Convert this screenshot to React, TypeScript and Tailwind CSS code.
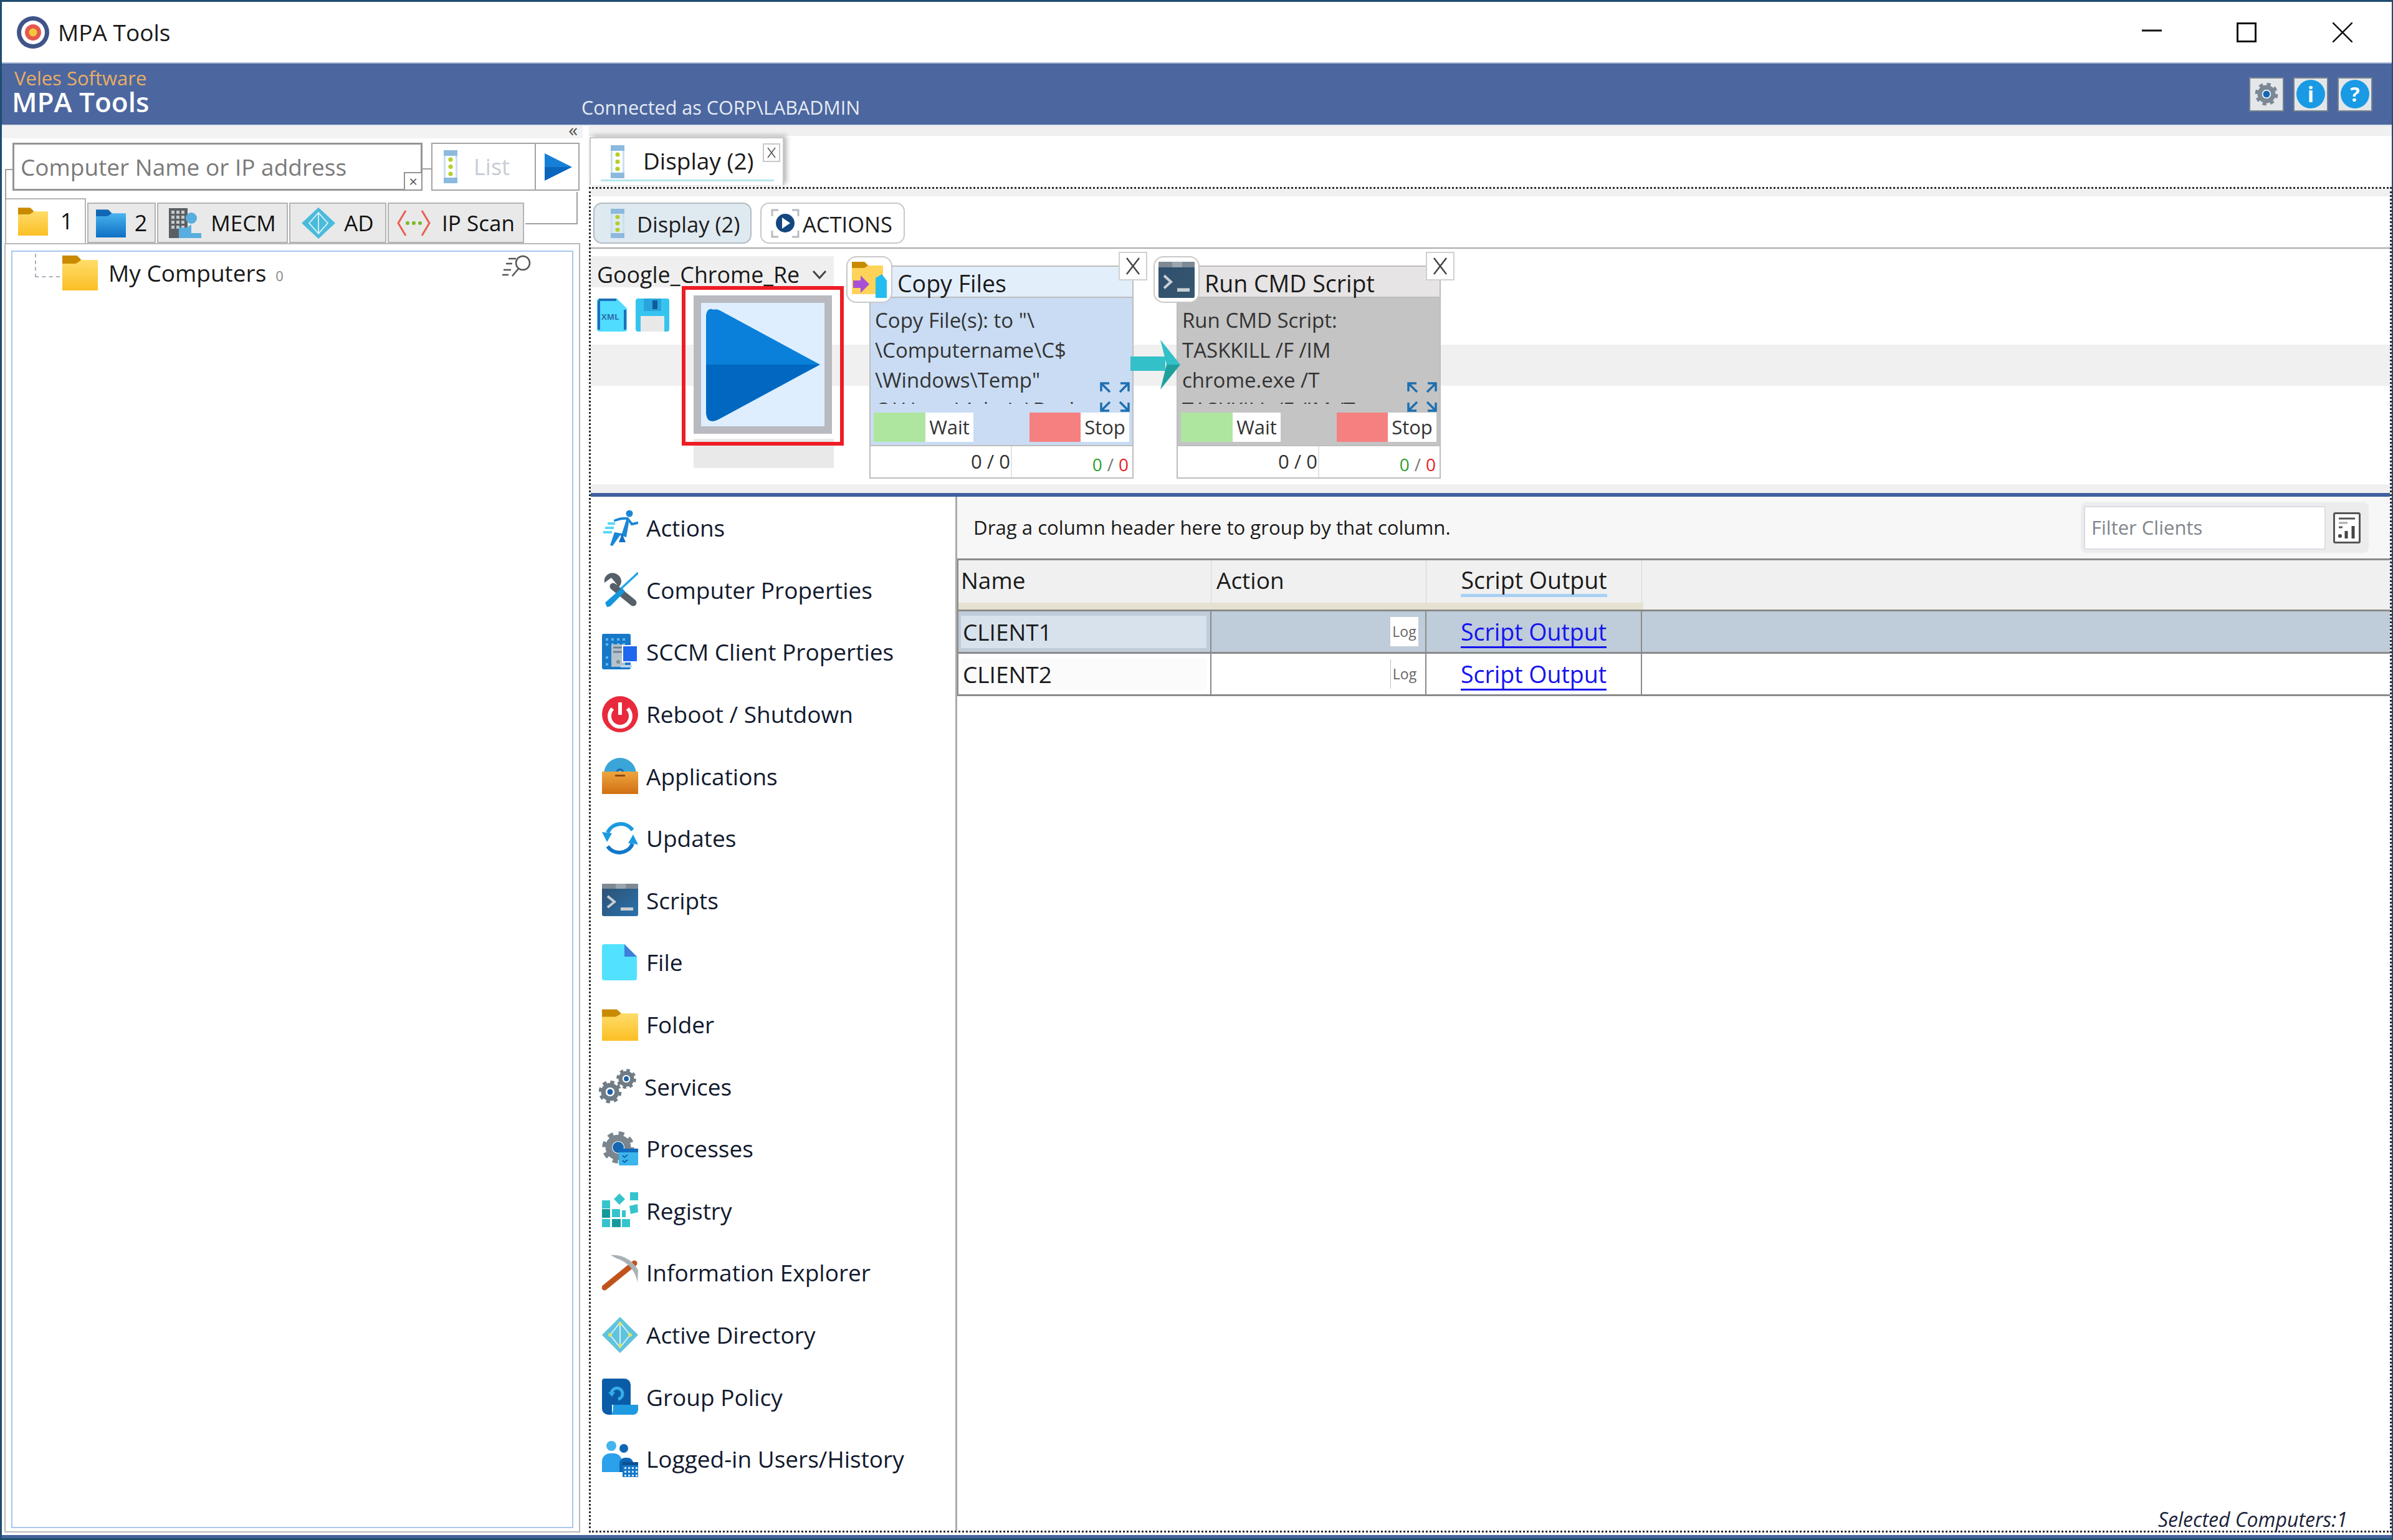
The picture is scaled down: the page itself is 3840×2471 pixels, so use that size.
import React from "react";

const Folder = ({ w = 58, h = 58, tab = "#c98a00", a = "#ffdc6a", b = "#fbbf24", id }: { w?: number; h?: number; tab?: string; a?: string; b?: string; id: string }) => (
  <svg width={w} height={h} viewBox="0 0 58 58" preserveAspectRatio="none">
    <defs>
      <linearGradient id={id} x1="0" y1="0" x2="0" y2="1">
        <stop offset="0" stopColor={a} />
        <stop offset="1" stopColor={b} />
      </linearGradient>
    </defs>
    <path d="M0 2h24l7 7v10H0z" fill={tab} />
    <path d="M0 9h58v49H0z" fill={`url(#${id})`} />
    <path d="M0 2h22l8 8-8 5H0z" fill={tab} />
  </svg>
);

const DisplayIcon = ({ h = 53 }: { h?: number }) => (
  <svg width="22" height={h} viewBox="0 0 22 53" preserveAspectRatio="none">
    <rect x="0" y="0" width="22" height="9" fill="#8cb9de" />
    <rect x="0" y="44" width="22" height="9" fill="#8cb9de" />
    <rect x="0" y="9" width="3" height="35" fill="#c9e0f2" />
    <rect x="19" y="9" width="3" height="35" fill="#c9e0f2" />
    <circle cx="11" cy="15" r="3.6" fill="#b4cf2c" />
    <circle cx="11" cy="26.5" r="3.6" fill="#b4cf2c" />
    <circle cx="11" cy="38" r="3.6" fill="#b4cf2c" />
  </svg>
);

const Gear = ({ cx, cy, r, fill = "#6f7b85", hole = "#1d5fa8", holeR }: { cx: number; cy: number; r: number; fill?: string; hole?: string; holeR?: number }) => {
  const teeth = 8;
  const c = 2 * Math.PI * r;
  return (
    <g>
      <circle cx={cx} cy={cy} r={r} fill="none" stroke={fill} strokeWidth={r * 0.45} strokeDasharray={`${c / teeth / 2} ${c / teeth / 2}`} />
      <circle cx={cx} cy={cy} r={r * 0.72} fill="none" stroke={fill} strokeWidth={r * 0.5} />
      <circle cx={cx} cy={cy} r={r * 0.47} fill="#fff" />
      <circle cx={cx} cy={cy} r={holeR ?? r * 0.3} fill={hole} />
    </g>
  );
};

const Terminal = ({ w = 58, h = 52 }: { w?: number; h?: number }) => (
  <svg width={w} height={h} viewBox="0 0 58 52" preserveAspectRatio="none">
    <defs>
      <linearGradient id={`term${w}${h}`} x1="0" y1="0" x2="1" y2="1">
        <stop offset="0" stopColor="#2e4f6e" />
        <stop offset="1" stopColor={h > 52 ? "#37566f" : "#2a72ad"} />
      </linearGradient>
    </defs>
    <rect width="58" height="52" rx="3" fill={`url(#term${w}${h})`} />
    <rect x="0" y="0" width="58" height="8" fill="#7d8a95" />
    <rect x="22" y="0" width="16" height="8" fill="#9aa5ae" />
    <path d="M9 20l11 9-11 9" fill="none" stroke="#c8ced3" strokeWidth="4" />
    <rect x="30" y="38" width="20" height="5" fill="#c8ced3" />
  </svg>
);

const MenuIcon = ({ name }: { name: string }) => {
  switch (name) {
    case "actions":
      return (
        <svg width="58" height="58" viewBox="0 0 58 58">
          <circle cx="44" cy="6" r="5.5" fill="#1c86d6" />
          <path d="M21 17c8-3 14-4 20-3l7 9 9-2" fill="none" stroke="#1c86d6" strokeWidth="4" strokeLinecap="round" />
          <path d="M40 13L32 38l-12-2-7 21 4 1 12-17 10 3 4-23z" fill="#1c86d6" />
          <path d="M32 38l6 14 -11 0 3-8z" fill="#0f6fc0" />
          <path d="M2 36h14M5 29h14M9 22h12" stroke="#5ad9f5" strokeWidth="4" />
        </svg>
      );
    case "props":
      return (
        <svg width="58" height="58" viewBox="0 0 58 58">
          <path d="M18 24L50 50" stroke="#55606a" strokeWidth="11" strokeLinecap="round" />
          <path d="M21 3a13 13 0 0 0-17 15L15 10l9 11-8 8a14 14 0 0 0 15-13c0-6-4-11-10-13z" fill="#55606a" />
          <path d="M58 2L30 28" stroke="#22a7e8" strokeWidth="3.5" />
          <path d="M32 26L5 50l3 7 5-1 24-24z" fill="#1496de" />
        </svg>
      );
    case "sccm":
      return (
        <svg width="58" height="58" viewBox="0 0 58 58">
          <rect x="0" y="0" width="46" height="57" rx="3" fill="#1778c8" />
          <g fill="#5db5ef">
            {[6, 15, 24, 33].map((x) => [7, 15, 36, 47].map((y) => <rect key={`${x}${y}`} x={x} y={y} width="4" height="4" />))}
          </g>
          <rect x="15" y="17" width="22" height="36" fill="#b4c2cc" />
          <path d="M18 22h16M18 29h16" stroke="#6f8090" strokeWidth="3" />
          <circle cx="26" cy="45" r="3" fill="#7f8e99" />
          <rect x="32" y="18" width="26" height="28" fill="#fff" />
          <rect x="34" y="20" width="22" height="24" fill="#2068ee" />
          <rect x="30" y="50" width="18" height="4" fill="#b7d6ef" />
        </svg>
      );
    case "reboot":
      return (
        <svg width="58" height="58" viewBox="0 0 58 58">
          <circle cx="29" cy="29" r="29" fill="#e82a3c" />
          <path d="M17 20a17 17 0 1 0 24 0" fill="none" stroke="#fff" strokeWidth="6" />
          <path d="M29 10v20" stroke="#fff" strokeWidth="6" />
        </svg>
      );
    case "apps":
      return (
        <svg width="58" height="58" viewBox="0 0 58 58">
          <circle cx="29" cy="26" r="26" fill="#39a5d8" />
          <circle cx="29" cy="24" r="7" fill="#1f6fb0" />
          <circle cx="29" cy="24" r="3" fill="#cfeaf8" />
          <defs>
            <linearGradient id="brief" x1="0" y1="0" x2="0" y2="1">
              <stop offset="0" stopColor="#eea53f" />
              <stop offset="1" stopColor="#d16f14" />
            </linearGradient>
          </defs>
          <path d="M0 22h58v36H0z" fill="url(#brief)" />
          <rect x="21" y="27" width="16" height="3" fill="#874c12" />
        </svg>
      );
    case "updates":
      return (
        <svg width="58" height="58" viewBox="0 0 58 58" fill="none">
          <path d="M9 20A23 23 0 0 1 49 16" stroke="#1c9ae0" strokeWidth="6" />
          <path d="M49 38A23 23 0 0 1 9 42" stroke="#1277c8" strokeWidth="6" />
          <path d="M0 19l16 2-8 14z" fill="#1c9ae0" />
          <path d="M58 39l-16-2 8-14z" fill="#1c9ae0" />
        </svg>
      );
    case "file":
      return (
        <svg width="56" height="58" viewBox="0 0 56 58">
          <path d="M4 0h32l20 20v34a4 4 0 0 1-4 4H4a4 4 0 0 1-4-4V4a4 4 0 0 1 4-4z" fill="#52e2ff" />
          <path d="M36 0l20 20H36z" fill="#3d7ed8" />
        </svg>
      );
    case "services":
      return (
        <svg width="62" height="58" viewBox="0 0 62 58" className="-ml-[5px]">
          <Gear cx={44} cy={17} r={13} />
          <Gear cx={18} cy={38} r={15} />
        </svg>
      );
    case "processes":
      return (
        <svg width="58" height="56" viewBox="0 0 58 56">
          <Gear cx={26} cy={26} r={21} fill="#7a858e" hole="#1667b0" holeR={9} />
          <rect x="27" y="28" width="31" height="27" rx="2" fill="#3cb4ec" />
          <rect x="27" y="28" width="31" height="6" fill="#0f6cc0" />
          <path d="M33 39l3 3 5-4M33 47l3 3 5-4" stroke="#0e5fb0" strokeWidth="2" fill="none" />
        </svg>
      );
    case "registry":
      return (
        <svg width="58" height="58" viewBox="0 0 58 58">
          <g fill="#35c4cd">
            <rect x="0" y="13" width="13" height="13" />
            <rect x="16" y="27" width="13" height="13" />
            <rect x="0" y="43" width="13" height="13" />
            <rect x="32" y="43" width="13" height="13" />
            <rect x="45" y="0" width="13" height="13" />
            <path d="M28 2l9 9-9 9-9-9z" />
            <path d="M44 22l13-3 1 13-12 3z" />
          </g>
          <g fill="#159a9c">
            <rect x="0" y="27" width="13" height="14" />
            <rect x="16" y="43" width="14" height="13" />
          </g>
          <rect x="32" y="29" width="6" height="11" fill="#35c4cd" />
        </svg>
      );
    case "pick":
      return (
        <svg width="58" height="58" viewBox="0 0 58 58">
          <path d="M4 53L52 14" stroke="#c0531b" strokeWidth="9" strokeLinecap="round" />
          <path d="M14 1c16-2 34 6 44 24l-1 20c-4-22-18-34-34-39z" fill="#a9b0b6" />
        </svg>
      );
    case "ad":
      return (
        <svg width="58" height="58" viewBox="0 0 58 58">
          <path d="M29 0l29 29-29 29L0 29z" fill="#5fc3de" />
          <path d="M29 9v40M13 29l16-20 16 20-16 20z" stroke="#d8f1f7" strokeWidth="2" fill="none" />
          <circle cx="29" cy="11" r="3" fill="#d9e36a" />
          <circle cx="29" cy="46" r="3" fill="#d9e36a" />
          <circle cx="13" cy="29" r="3" fill="#d9e36a" />
          <circle cx="45" cy="29" r="3" fill="#d9e36a" />
        </svg>
      );
    case "gp":
      return (
        <svg width="58" height="58" viewBox="0 0 58 58">
          <path d="M4 0h32a10 10 0 0 1 10 10v32H16v16H10A10 10 0 0 1 0 48V4a4 4 0 0 1 4-4z" fill="#0a5ca8" />
          <path d="M46 42h12v8a8 8 0 0 1-8 8H14c3-2 4-6 4-16z" fill="#1f9ae0" />
          <path d="M15 24a9 9 0 1 1 11 9" fill="none" stroke="#35aee8" strokeWidth="5" />
          <path d="M10 22h11l-5 7z" fill="#35aee8" />
        </svg>
      );
    case "users":
      return (
        <svg width="58" height="58" viewBox="0 0 58 58">
          <circle cx="15" cy="8" r="8" fill="#45b4ee" />
          <circle cx="35" cy="12" r="7" fill="#0f66b4" />
          <path d="M0 50V33a13 13 0 0 1 13-13h6a13 13 0 0 1 13 13v17z" fill="#2aa1ea" />
          <path d="M28 50V35a9 9 0 0 1 9-8h4a9 9 0 0 1 9 8v15z" fill="#0f66b4" />
          <rect x="33" y="34" width="25" height="24" fill="#1477c6" />
          <rect x="33" y="34" width="25" height="5" fill="#0d4f93" />
          <g fill="#cfe8f8">
            {[42, 48, 54].map((y) => [36, 42, 48, 54].map((x) => <rect key={`${x}${y}`} x={x} y={y} width="3" height="3" />))}
          </g>
        </svg>
      );
    default:
      return null;
  }
};

const MENU: [string, string][] = [
  ["actions", "Actions"],
  ["props", "Computer Properties"],
  ["sccm", "SCCM Client Properties"],
  ["reboot", "Reboot / Shutdown"],
  ["apps", "Applications"],
  ["updates", "Updates"],
  ["scripts", "Scripts"],
  ["file", "File"],
  ["folder", "Folder"],
  ["services", "Services"],
  ["processes", "Processes"],
  ["registry", "Registry"],
  ["pick", "Information Explorer"],
  ["ad", "Active Directory"],
  ["gp", "Group Policy"],
  ["users", "Logged-in Users/History"],
];

const Expand = () => (
  <svg width="50" height="50" viewBox="0 0 50 50" fill="none" stroke="#1d6fb0" strokeWidth="3.5">
    <path d="M3 16V3h13M3 3l14 14M47 16V3H34M47 3L33 17M3 34v13h13M3 47l14-14M47 34v13H34M47 47L33 33" />
  </svg>
);

const Card = ({ title, body, head, bg, icon, mark }: { title: string; body: string[]; head: string; bg: string; icon: React.ReactNode; mark?: React.ReactNode }) => (
  <div className="relative mt-[27px] flex h-[342px] w-[424px] flex-col border-2 border-[#bdbdbd]" style={{ backgroundColor: bg }}>
    <div className="flex h-[50px] shrink-0 items-center border-b-2 border-[#bdbdbd] pl-[43px] text-[37.5px] leading-none" style={{ backgroundColor: head }}>
      <span className="pt-[6px]">{title}</span>
    </div>
    <div className="relative h-[170px] shrink-0 overflow-hidden px-[7px] pt-[12px] text-[33px] leading-[48px] whitespace-nowrap text-[#333]">
      {body.map((l) => (
        <div key={l}>{l}</div>
      ))}
    </div>
    <div className="mt-[14px] flex h-[47px] shrink-0 justify-between px-[5px] text-[31px]">
      {["Wait", "Stop"].map((t, i) => (
        <div key={t} className="flex h-[47px] w-[160px]">
          <div className={i === 0 ? "w-[83px] bg-[#aee6a0]" : "w-[82px] bg-[#f58080]"} />
          <div className="flex flex-1 items-center justify-center bg-white text-[#333]">{t}</div>
        </div>
      ))}
    </div>
    <div className="mt-[5px] flex flex-1 border-t-2 border-[#bdbdbd] bg-white text-[31px] leading-[42px] text-[#333]">
      <div className="flex w-[227px] justify-end border-r-2 border-[#e4e4e4] pt-[3px] pr-[1px]">0 / 0</div>
      <div className="flex flex-1 justify-end pt-[10px] pr-[6px] text-[28px] leading-[38px]">
        <span className="text-[#2f9e2f]">0</span>
        <span className="px-[8px] text-[#777]">/</span>
        <span className="text-[#e8202a]">0</span>
      </div>
    </div>
    <div className="absolute -top-[17px] -left-[39px] flex h-[75px] w-[74px] items-center justify-center rounded-[16px] border-2 border-[#c8c8c8] bg-white">{icon}</div>
    <div className="absolute -top-[24px] -right-[24px] flex h-[46px] w-[46px] items-center justify-center border-2 border-[#d0d0d0] bg-white">
      <svg width="22" height="28" viewBox="0 0 22 28" stroke="#444" strokeWidth="2.5">
        <path d="M1 1l20 26M21 1L1 27" />
      </svg>
    </div>
    <div className="absolute top-[184px] right-[3px]">
      <Expand />
    </div>
    {mark}
  </div>
);

const Arrow = () => (
  <svg width="80" height="80" viewBox="0 0 80 80" className="absolute top-[117px] -left-[76px]">
    <path d="M0 27h56V50H0z" fill="#33c0c8" />
    <path d="M48 0l32 40H58z" fill="#33c0c8" />
    <path d="M58 40h22L48 80z" fill="#1fa09f" />
  </svg>
);

const Tab = ({ w, icon, label, gap, active, size = 36 }: { w: number; icon: React.ReactNode; label: string; gap: number; active?: boolean; size?: number }) => (
  <div
    className={`flex items-center justify-center border-2 border-[#b4b4b4] ${active ? "h-[72px] border-b-0 bg-white" : "h-[65px] bg-[#e9e9e9]"}`}
    style={{ width: w, gap }}
  >
    {icon}
    <span className="leading-none whitespace-nowrap text-[#111]" style={{ fontSize: size }}>{label}</span>
  </div>
);

const Row = ({ name, selected }: { name: string; selected?: boolean }) => (
  <div className={`flex h-[68px] border-b-[3px] border-[#8a8a8a] ${selected ? "bg-[#bfccd9]" : "bg-white"}`}>
    <div className="flex w-[408px] items-center border-r-2 border-[#8a8a8a] px-[6px]">
      <div className={`flex h-[52px] w-full items-center pl-[3px] ${selected ? "bg-[#d8e2ec]" : "bg-[#fbfbfb]"}`}>{name}</div>
    </div>
    <div className="flex w-[345px] items-center justify-end border-r-2 border-[#8a8a8a] pr-[11px]">
      <div className={`flex h-[47px] w-[45px] items-center justify-center text-[23px] text-[#666] ${selected ? "bg-white" : "border-l border-[#c0c0c0]"}`}>Log</div>
    </div>
    <div className="flex w-[346px] items-center justify-center border-r-2 border-[#8a8a8a]">
      <span className="mt-[3px] border-b-[3px] border-[#1414f0] text-[37.5px] leading-[46px] text-[#1414f0]">Script Output</span>
    </div>
  </div>
);

export default function App() {
  return (
    <div className="flex h-[2471px] w-[3840px] flex-col overflow-hidden border-t-[3px] border-r-[2px] border-b-[3px] border-l-[3px] border-t-[#1f4d70] border-r-[#1f4d70] border-b-[#1c5068] border-l-[#1f4d70] bg-white font-['Open_Sans','Noto_Sans',sans-serif] text-[#1a1a1a]">
      {/* Title bar */}
      <div className="flex h-[97px] shrink-0 items-center pl-[24px]">
        <svg width="52" height="52" viewBox="0 0 52 52">
          <circle cx="26" cy="26" r="26" fill="#3f5488" />
          <circle cx="26" cy="26" r="19" fill="#fff" />
          <circle cx="26" cy="26" r="13" fill="#e5584f" />
          <circle cx="26" cy="26" r="6.5" fill="#f4c63c" />
        </svg>
        <span className="ml-[14px] text-[37px] leading-none">MPA Tools</span>
        <div className="ml-auto flex items-center">
          <svg width="32" height="32" viewBox="0 0 32 32" className="mr-[120px]">
            <path d="M0 13h32" stroke="#111" strokeWidth="3" />
          </svg>
          <svg width="32" height="32" viewBox="0 0 32 32" className="mr-[122px]" fill="none">
            <rect x="1.5" y="1.5" width="29" height="29" stroke="#111" strokeWidth="3" />
          </svg>
          <svg width="32" height="32" viewBox="0 0 32 32" className="mr-[63px]">
            <path d="M0 0l32 32M32 0L0 32" stroke="#111" strokeWidth="2.5" />
          </svg>
        </div>
      </div>

      {/* Header */}
      <div className="relative flex h-[100px] shrink-0 items-center border-t-2 border-[#a8b8d4] bg-[#4c679f] pl-[16px]">
        <div className="flex -translate-y-[3px] flex-col">
          <span className="pl-[4px] text-[31px] leading-[30px] text-[#e8ad66]">Veles Software</span>
          <span className="text-[44px] leading-[46px] font-semibold text-white">MPA Tools</span>
        </div>
        <span className="absolute top-[55px] left-[930px] text-[30.5px] leading-none text-[#e6ebf5]">Connected as CORP\LABADMIN</span>
        <div className="mr-[31px] ml-auto flex gap-[15px]">
          <div className="flex h-[55px] w-[56px] items-center justify-center border-2 border-[#77828e] bg-[#e4e7ea]">
            <svg width="44" height="44" viewBox="0 0 44 44">
              <Gear cx={22} cy={22} r={15} fill="#7b8794" hole="#1566b4" holeR={5.5} />
            </svg>
          </div>
          <div className="flex h-[55px] w-[56px] items-center justify-center border-2 border-[#77828e] bg-[#e4e7ea]">
            <div className="flex h-[46px] w-[46px] items-center justify-center rounded-full bg-[#1a9ae4] text-[34px] leading-none font-bold text-white">i</div>
          </div>
          <div className="flex h-[55px] w-[56px] items-center justify-center border-2 border-[#77828e] bg-[#e4e7ea]">
            <div className="flex h-[46px] w-[46px] items-center justify-center rounded-full bg-[#1a9ae4] text-[32px] leading-none font-bold text-white">?</div>
          </div>
        </div>
      </div>

      {/* Main */}
      <div className="flex min-h-0 flex-1 border-t-2 border-[#dfe4ee]">
        {/* Left panel */}
        <div className="relative flex w-[932px] shrink-0 flex-col pb-[4px]">
          <div className="flex h-[20px] shrink-0 items-center justify-end bg-[#f3f3f3] pr-[8px] text-[30px] leading-none text-[#555]">
            <span className="-mt-[8px]">«</span>
          </div>
          <div className="mt-[7px] flex h-[77px] shrink-0 pl-[17px]">
            <div className="relative flex w-[658px] items-center border-[3px] border-[#949494] pl-[10px] text-[37px] whitespace-nowrap text-[#7a7a7a]">
              Computer Name or IP address
              <div className="absolute -right-[3px] -bottom-[3px] flex h-[30px] w-[30px] items-center justify-center border-2 border-[#949494] bg-white text-[24px] leading-none text-[#555]">×</div>
            </div>
            <div className="ml-[14px] flex w-[168px] items-center border-2 border-[#a4a4a4] pl-[18px]">
              <DisplayIcon />
              <span className="ml-[26px] text-[36px] text-[#c8ccd6]">List</span>
            </div>
            <div className="flex w-[70px] items-center justify-center border-2 border-l-0 border-[#a4a4a4] pl-[4px]">
              <svg width="48" height="48" viewBox="0 0 48 48">
                <path d="M2 2l44 22H2z" fill="#1680d8" />
                <path d="M2 46l44-22H2z" fill="#0a66bc" />
              </svg>
            </div>
          </div>
          <div className="mt-[12px] flex h-[72px] shrink-0 items-end gap-[2px] pl-[5px]">
            <Tab w={130} gap={20} active label="1" icon={<Folder id="f1" w={48} h={46} />} />
            <Tab w={110} gap={14} label="2" icon={<Folder id="f2" w={48} h={46} tab="#1167b4" a="#48b4ef" b="#0e6fc4" />} />
            <Tab w={210} gap={15} size={35} label="MECM" icon={
              <svg width="52" height="48" viewBox="0 0 52 48">
                <rect x="0" y="0" width="30" height="48" fill="#5b5f62" />
                <g fill="#c6c9cc">{[4, 12, 20].map((x) => [4, 12, 20, 28].map((y) => <rect key={`${x}${y}`} x={x} y={y} width="5" height="5" />))}</g>
                <circle cx="36" cy="16" r="9" fill="#58aede" />
                <path d="M16 48V30c8 4 16 0 20-4v14h16v8z" fill="#58aede" />
              </svg>
            } />
            <Tab w={156} gap={14} size={35} label="AD" icon={
              <svg width="54" height="52" viewBox="0 0 58 54">
                <path d="M29 0l29 27-29 27L0 27z" fill="#4bbbdc" />
                <path d="M29 9v36M13 27l16-18 16 18-16 18z" stroke="#d8f1f7" strokeWidth="2" fill="none" />
              </svg>
            } />
            <Tab w={219} gap={18} size={35} label="IP Scan" icon={
              <svg width="54" height="42" viewBox="0 0 54 42" fill="none">
                <path d="M14 1L2 21l12 20M40 1l12 20-12 20" stroke="#e85f50" strokeWidth="3" />
                <circle cx="17" cy="21" r="3" fill="#7bb82a" />
                <circle cx="27" cy="21" r="3" fill="#7bb82a" />
                <circle cx="37" cy="21" r="3" fill="#7bb82a" />
              </svg>
            } />
          </div>
          <div className="ml-[4px] flex min-h-0 w-[924px] flex-1 flex-col border-2 border-[#b8b8b8] px-[9px] pt-[10px] pb-[5px]">
            <div className="flex flex-1 flex-col border-2 border-[#a8c8ee]">
              <div className="flex h-[66px] items-center pl-[80px]">
                <Folder id="f3" w={57} h={58} tab="#c98a00" />
                <span className="ml-[17px] text-[37px] leading-none">My Computers</span>
                <span className="mt-[10px] ml-[15px] text-[22px] leading-none text-[#888]">0</span>
                <svg width="48" height="36" viewBox="0 0 48 36" fill="none" stroke="#555" strokeWidth="2.5" className="mr-[64px] -mt-[20px] ml-auto">
                  <circle cx="33" cy="13" r="11" />
                  <path d="M26 22L16 34M10 6h12M6 14h10M2 24h12M0 32h10" />
                </svg>
              </div>
            </div>
          </div>
          {/* Group outline lines and tree connector */}
          <div className="absolute top-[69px] left-[5px] h-[50px] w-[12px] border-t-2 border-l-2 border-[#a0a0a0]" />
          <div className="absolute top-[68px] left-[675px] h-[2px] w-[14px] bg-[#a0a0a0]" />
          <div className="absolute top-[106px] left-[840px] h-[52px] w-[84px] border-r-2 border-b-2 border-[#a0a0a0]" />
          <div className="absolute top-[205px] left-[53px] h-[38px] w-[40px] border-b-2 border-l-2 border-dashed border-[#aab0bb]" />
        </div>

        {/* Right panel */}
        <div className="ml-[10px] flex min-w-0 flex-1 flex-col">
          <div className="h-[16px] shrink-0 bg-[#f0f0f0]" />
          <div className="flex h-[82px] shrink-0 items-start bg-white pt-[2px]">
            <div className="relative ml-[1px] flex h-[77px] w-[312px] items-center border-2 border-b-0 border-[#c8c8c8] pl-[32px] shadow-[4px_-2px_8px_rgba(0,0,0,0.3)]">
              <DisplayIcon />
              <span className="ml-[30px] pb-[4px] text-[37px] leading-none whitespace-nowrap">Display (2)</span>
              <div className="absolute top-[8px] right-[4px] flex h-[30px] w-[28px] items-center justify-center border-2 border-[#c8c8c8] bg-white">
                <svg width="14" height="18" viewBox="0 0 14 18" stroke="#555" strokeWidth="1.6">
                  <path d="M1 1l12 16M13 1L1 17" />
                </svg>
              </div>
              <div className="absolute right-[14px] bottom-[6px] left-[16px] h-[3px] bg-[#b6e6ec]" />
            </div>
          </div>
          <div className="mb-[4px] flex min-h-0 flex-1 flex-col border-[3px] border-dotted border-[#2c2c2c]">
            <div className="h-[12px] shrink-0 bg-[#f0f0f0]" />
            <div className="flex h-[84px] shrink-0 items-center gap-[14px] border-b-2 border-[#a8a8a8] bg-white pt-[4px] pl-[4px]">
              <div className="flex h-[66px] w-[254px] items-center rounded-[14px] border-2 border-[#b4bcc4] bg-[#dfe9f0] pl-[26px]">
                <DisplayIcon h={47} />
                <span className="ml-[20px] pt-[4px] text-[34.5px] leading-none whitespace-nowrap">Display (2)</span>
              </div>
              <div className="flex h-[66px] w-[232px] items-center rounded-[14px] border-2 border-[#c8c8c8] bg-white pl-[15px]">
                <svg width="46" height="47" viewBox="0 0 46 47" fill="none">
                  <path d="M2 12V2h10M34 2h10v10M2 35v10h10M34 45h10V35" stroke="#b8bcc0" strokeWidth="3" />
                  <circle cx="23" cy="23" r="15" fill="#14477f" />
                  <path d="M18 14l13 9-13 9z" fill="#fff" />
                </svg>
                <span className="ml-[5px] pt-[4px] text-[34.5px] leading-none">ACTIONS</span>
              </div>
            </div>

            <div className="relative flex h-[378px] shrink-0 bg-white">
              <div className="absolute top-[154px] right-0 left-0 h-[66px] bg-[#f0f0f0]" />
              <div className="relative w-[390px] shrink-0">
                <div className="mt-[12px] flex h-[50px] items-center bg-[#efefef] pt-[10px] pl-[10px] text-[35.8px] leading-none whitespace-nowrap">
                  Google_Chrome_Re
                  <svg width="24" height="16" viewBox="0 0 24 16" fill="none" stroke="#444" strokeWidth="3" className="ml-[20px]">
                    <path d="M2 2l10 11L22 2" />
                  </svg>
                </div>
                <div className="mt-[13px] flex">
                  <div className="flex h-[58px] w-[165px] items-end gap-[14px] pl-[10px]">
                    <svg width="48" height="53" viewBox="0 0 48 53">
                      <path d="M4 0h28l16 16v33a4 4 0 0 1-4 4H4a4 4 0 0 1-4-4V4a4 4 0 0 1 4-4z" fill="#4fdcff" />
                      <path d="M3 3v47M45 18v32M3 2h28" stroke="#1d6fbb" strokeWidth="4" fill="none" />
                      <text x="7" y="34" fontSize="13" fontWeight="700" fill="#2b6dab">XML</text>
                    </svg>
                    <svg width="54" height="53" viewBox="0 0 54 53">
                      <rect width="54" height="53" rx="4" fill="#35c4f0" />
                      <rect x="13" y="0" width="28" height="20" fill="#2aa4dc" />
                      <rect x="27" y="3" width="8" height="14" fill="#0f5b9b" />
                      <rect x="8" y="28" width="38" height="25" fill="#e8e8e8" />
                    </svg>
                  </div>
                  <div className="relative flex w-[225px] flex-col">
                    <div className="flex h-[222px] w-[222px] items-center justify-center bg-[#b8bac0]">
                      <div className="flex h-[198px] w-[198px] items-center justify-center bg-[#deeeff]">
                        <svg width="186" height="186" viewBox="0 0 186 186">
                          <path d="M14 5Q4 0 2 14V93H185L24 6Q18 3 14 5z" fill="#0a80da" />
                          <path d="M2 93h183L22 181Q4 190 2 172z" fill="#0068c0" />
                        </svg>
                      </div>
                    </div>
                    <div className="mt-[8px] h-[47px] bg-[#e9e9e9]" />
                    <div className="absolute -top-[15px] -left-[19px] h-[256px] w-[260px] border-[6px] border-[#ee1c25]" />
                  </div>
                </div>
              </div>
              <div className="relative ml-[57px]">
                <Card
                  title="Copy Files"
                  head="#e3eefb"
                  bg="#c9dcf3"
                  body={['Copy File(s): to "\\', "\\Computername\\C$", '\\Windows\\Temp"', "C:\\Users\\Admin\\Desktop"]}
                  icon={
                    <svg width="56" height="62" viewBox="0 0 56 62">
                      <path d="M0 2h20l6 6h24v46H0z" fill="#ffd35a" />
                      <path d="M0 2h20l6 6-6 4H0z" fill="#c98a00" />
                      <path d="M2 32h12v-8l14 14-14 14v-8H2z" fill="#a84fd8" />
                      <path d="M38 28l10-6 8 10v28H38z" fill="#24bdf0" />
                    </svg>
                  }
                />
              </div>
              <div className="relative ml-[69px]">
                <Card
                  title="Run CMD Script"
                  head="#e6e4e4"
                  bg="#c4c4c4"
                  body={["Run CMD Script:", "TASKKILL /F /IM", "chrome.exe /T", "TASKKILL /F /IM /T"]}
                  icon={<Terminal w={58} h={58} />}
                  mark={<Arrow />}
                />
              </div>
            </div>

            <div className="h-[14px] shrink-0 bg-[#f0f0f0]" />
            <div className="h-[6px] shrink-0 bg-[#3f5f9f]" />

            <div className="flex min-h-0 flex-1">
              <div className="w-[588px] shrink-0 border-r-[3px] border-[#ababab]">
                {MENU.map(([k, label]) => (
                  <div key={k} className="flex h-[99.6px] items-center pl-[18px]">
                    <div className="flex w-[71px] shrink-0 items-center">
                      {k === "scripts" ? <Terminal /> : k === "folder" ? <Folder id="f4" h={52} /> : <MenuIcon name={k} />}
                    </div>
                    <span className={`text-[37px] leading-none whitespace-nowrap text-[#111a2e] ${k === "services" ? "-ml-[3px]" : ""}`}>{label}</span>
                  </div>
                ))}
              </div>
              <div className="relative flex min-w-0 flex-1 flex-col">
                <div className="flex h-[99px] shrink-0 items-center justify-between bg-[#f7f7f7] pl-[26px]">
                  <span className="text-[31.2px] leading-none">Drag a column header here to group by that column.</span>
                  <div className="mr-[34px] flex h-[81px] w-[462px] items-center rounded-[8px] bg-[#ececec] pl-[5px]">
                    <div className="flex h-[70px] w-[388px] items-center border-2 border-[#dcdce8] bg-white pl-[10px] text-[31px] text-[#80858c]">Filter Clients</div>
                    <svg width="44" height="50" viewBox="0 0 44 50" fill="none" className="ml-[12px]">
                      <rect x="1.5" y="1.5" width="41" height="47" rx="2" stroke="#555" strokeWidth="3" fill="#fff" />
                      <path d="M9 10h26" stroke="#555" strokeWidth="3" />
                      <path d="M9 17h14" stroke="#aaa" strokeWidth="3" />
                      <path d="M9 24h6" stroke="#555" strokeWidth="3" />
                      <circle cx="11" cy="38" r="3" fill="#444" />
                      <path d="M21 42V30M32 42V22" stroke="#444" strokeWidth="5" />
                    </svg>
                  </div>
                </div>
                <div className="flex h-[85px] shrink-0 border-y-[3px] border-[#8a8a8a] bg-[#f0f0f0] text-[37px] leading-none">
                  <div className="flex w-[1101px] shrink-0 flex-col">
                    <div className="flex flex-1">
                      <div className="w-[408px] border-r border-[#d8d4c4] pt-[13px] pl-[6px]">Name</div>
                      <div className="w-[345px] border-r border-[#d8d4c4] pt-[13px] pl-[8px]">Action</div>
                      <div className="flex w-[346px] justify-center border-r border-[#d8d4c4] pt-[13px]">
                        <span className="h-[46px] border-b-[5px] border-[#a8d0f4] text-[37.5px]">Script Output</span>
                      </div>
                    </div>
                    <div className="h-[11px] bg-[#e6e2d2]" />
                  </div>
                </div>
                <div className="text-[37px] leading-none">
                  <Row name="CLIENT1" selected />
                  <Row name="CLIENT2" />
                </div>
                <div className="absolute top-[99px] left-0 h-[221px] w-[2px] bg-[#8a8a8a]" />
                <span className="absolute right-[68px] bottom-[2px] text-[32px] leading-none text-[#1a2238] italic">Selected Computers:1</span>
              </div>
            </div>
          </div>
        </div>
      </div>
      <div className="h-[5px] shrink-0 bg-[#46639f]" />
    </div>
  );
}
